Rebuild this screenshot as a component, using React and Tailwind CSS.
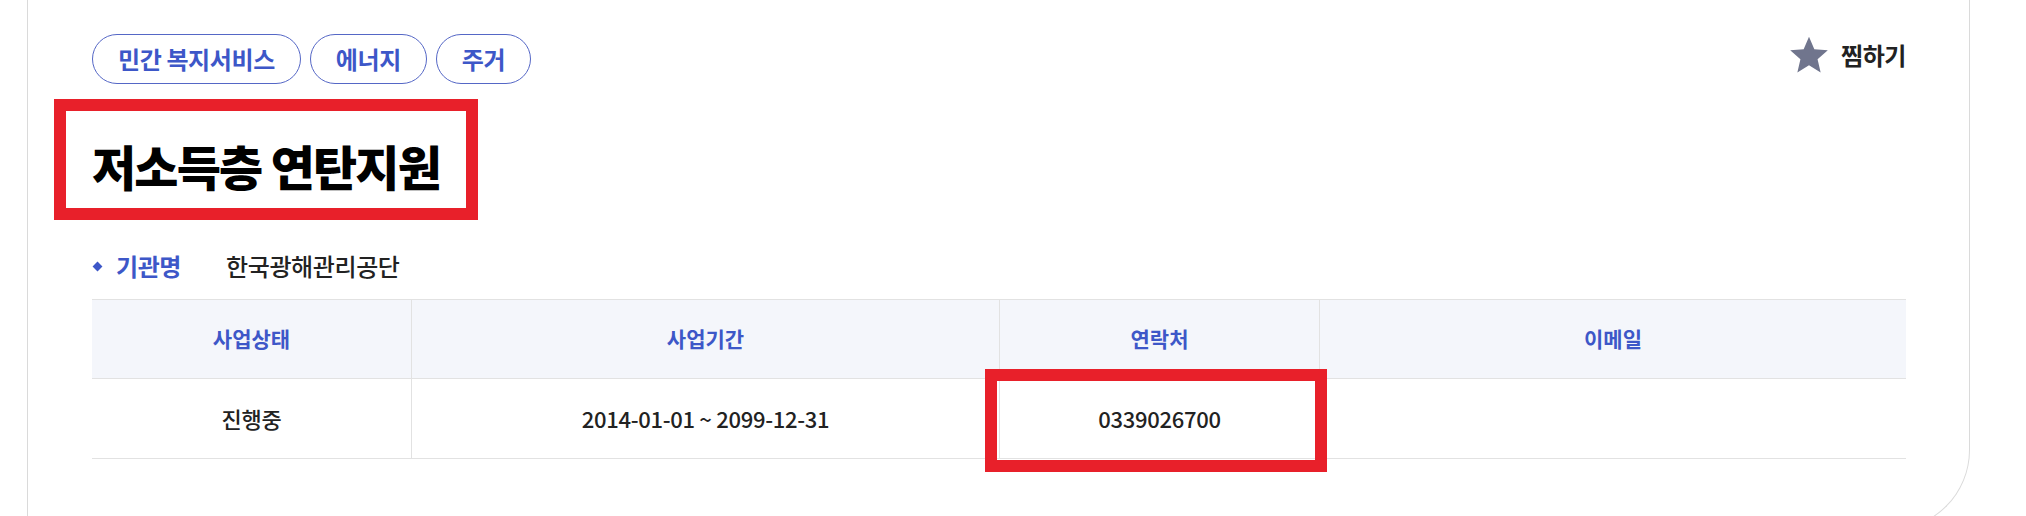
import { useState } from 'react'

const FONT = { fontFamily: '"Noto Sans CJK KR", "Noto Sans", sans-serif' }

const tags = ['민간 복지서비스', '에너지', '주거']

const columns = [
  { label: '사업상태', value: '진행중' },
  { label: '사업기간', value: '2014-01-01 ~ 2099-12-31' },
  { label: '연락처', value: '0339026700' },
  { label: '이메일', value: '' },
]

function StarIcon({ className }) {
  return (
    <svg viewBox="0 0 24 24" className={className} fill="currentColor">
      <path d="M12 1.6l3.05 7.1 7.7.65-5.85 5.05 1.75 7.55L12 17.9l-6.65 4.05 1.75-7.55L1.25 9.35l7.7-.65z" />
    </svg>
  )
}

export default function App() {
  const [liked, setLiked] = useState(false)

  return (
    <div className="relative h-[516px] w-[2026px] overflow-hidden bg-white" style={FONT}>
      {/* Card */}
      <div className="ml-[27px] w-[1943px] h-[530px] border-x border-b border-[#dadada] rounded-br-[80px] pl-[64px] pr-[63px] pt-[34px]">
        {/* Tags + like */}
        <div className="flex items-start justify-between">
          <div className="flex gap-[9px]">
            {tags.map(tag => (
              <span
                key={tag}
                className="h-[50px] px-[25px] flex items-center rounded-full border border-[#5567c6] text-[24px] font-semibold text-[#3d57c8] tracking-[-0.4px]"
              >
                {tag}
              </span>
            ))}
          </div>
          <button
            onClick={() => setLiked(!liked)}
            className="flex items-center gap-[11px] h-[40px] mt-[1px] text-[24px] font-semibold text-[#222] tracking-[-0.4px]"
          >
            <StarIcon className={`w-[42px] h-[42px] ${liked ? 'text-[#f5b400]' : 'text-[#70758d]'}`} />
            찜하기
          </button>
        </div>

        {/* Title */}
        <h1 className="mt-[52px] text-[48px] leading-[58px] font-black text-black tracking-[-1.8px]">
          저소득층 연탄지원
        </h1>

        {/* Agency */}
        <div className="mt-[56px] flex items-center h-[32px] text-[24px] tracking-[-0.4px]">
          <span className="w-[7px] h-[7px] ml-[2px] rotate-45 bg-[#3d57c8]" />
          <span className="ml-[15px] font-semibold text-[#3d57c8]">기관명</span>
          <span className="ml-[45px] font-medium text-[#222]">한국광해관리공단</span>
        </div>

        {/* Table */}
        <div className="mt-[17px] border-t border-[#e2e2e2]">
          <div className="grid grid-cols-[319px_588px_320px_1fr] h-[79px] bg-[#f4f6fb] border-b border-[#e2e2e2]">
            {columns.map((c, i) => (
              <div
                key={c.label}
                className={`flex items-center justify-center text-[21px] font-semibold text-[#3d57c8] ${i > 0 ? 'border-l border-[#e2e2e2]' : ''}`}
              >
                {c.label}
              </div>
            ))}
          </div>
          <div className="grid grid-cols-[319px_588px_320px_1fr] h-[80px] border-b border-[#e2e2e2]">
            {columns.map((c, i) => (
              <div
                key={c.label}
                className={`flex items-center justify-center text-[22px] font-medium text-[#222] tracking-[-0.3px] ${i > 0 ? 'border-l border-[#e2e2e2]' : ''}`}
              >
                {c.value}
              </div>
            ))}
          </div>
        </div>
      </div>

      {/* Annotation boxes */}
      <div className="absolute left-[54px] top-[99px] w-[424px] h-[121px] border-[12px] border-[#e8202a]" />
      <div className="absolute left-[985px] top-[369px] w-[342px] h-[103px] border-[12px] border-[#e8202a]" />
    </div>
  )
}
